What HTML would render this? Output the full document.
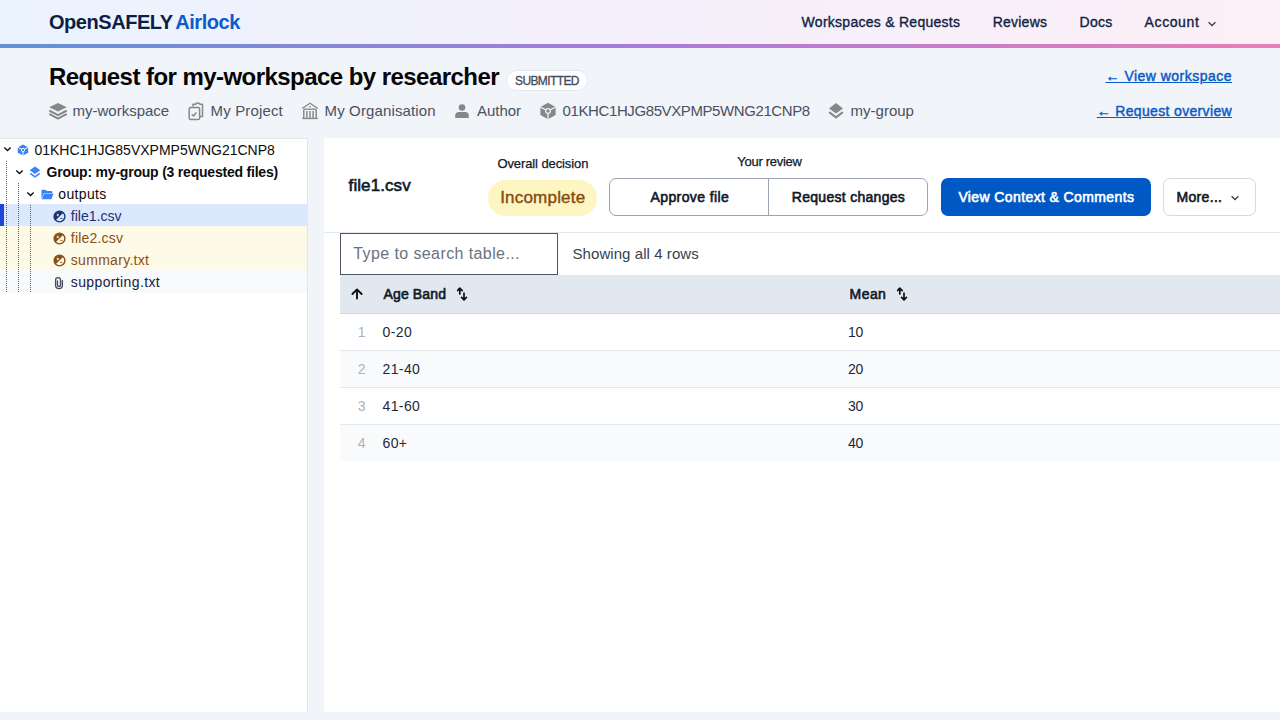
<!DOCTYPE html>
<html><head><meta charset="utf-8"><style>
html,body{margin:0;padding:0;}
body{width:1280px;height:720px;overflow:hidden;position:relative;background:#f1f4f9;font-family:"Liberation Sans",sans-serif;}
.t{position:absolute;white-space:nowrap;}
.r{position:absolute;display:block;}
</style></head><body>
<div class="r" style="left:0px;top:0px;width:1280px;height:44px;background:linear-gradient(90deg,#ebf3fe 0%,#f4effb 50%,#fdf0f7 100%);"></div>
<div class="r" style="left:0px;top:44px;width:1280px;height:4px;background:linear-gradient(90deg,#6092d6 0%,#a97bd9 50%,#e97eb6 100%);"></div>
<div class="t" style="left:49px;top:10.07px;font-size:20px;line-height:24px;color:#111;font-weight:700;letter-spacing:-0.45px;word-spacing:-1.5px;"><span style="color:#0b1f44">OpenSAFELY</span> <span style="color:#0b5bc8">Airlock</span></div>
<div class="t" style="left:801.6px;top:13.95px;font-size:14px;line-height:17px;color:#0f1f45;font-weight:400;letter-spacing:0.27px;-webkit-text-stroke:0.6px currentColor;-webkit-text-stroke:0.35px currentColor;">Workspaces &amp; Requests</div>
<div class="t" style="left:992.7px;top:13.95px;font-size:14px;line-height:17px;color:#0f1f45;font-weight:400;letter-spacing:0.23px;-webkit-text-stroke:0.6px currentColor;-webkit-text-stroke:0.35px currentColor;">Reviews</div>
<div class="t" style="left:1079.6px;top:13.95px;font-size:14px;line-height:17px;color:#0f1f45;font-weight:400;letter-spacing:0.23px;-webkit-text-stroke:0.6px currentColor;-webkit-text-stroke:0.35px currentColor;">Docs</div>
<div class="t" style="left:1144.6px;top:13.95px;font-size:14px;line-height:17px;color:#0f1f45;font-weight:400;letter-spacing:0.6px;-webkit-text-stroke:0.6px currentColor;-webkit-text-stroke:0.35px currentColor;">Account</div>
<svg class="r" style="left:1207px;top:19.5px;width:10px;height:8px" viewBox="0 0 10 8"><path d="M1.6 2.2 L5 5.5 L8.4 2.2" fill="none" stroke="#3a3f4a" stroke-width="1.35"/></svg>
<div class="t" style="left:49px;top:62.18px;font-size:24px;line-height:29px;color:#050505;font-weight:700;letter-spacing:-0.55px;">Request for my-workspace by researcher</div>
<div class="r" style="left:506px;top:70px;width:82px;height:21px;background:#fff;border:1px solid #e2e8f0;border-radius:11px;box-sizing:border-box;"></div>
<div class="t" style="left:515px;top:73.84px;font-size:12px;line-height:14px;color:#3f4b5b;font-weight:400;letter-spacing:-0.6px;-webkit-text-stroke:0.3px currentColor;">SUBMITTED</div>
<div class="t" style="left:72.5px;top:101.80px;font-size:15px;line-height:18px;color:#4b5160;font-weight:400;">my-workspace</div>
<div class="t" style="left:210.6px;top:101.80px;font-size:15px;line-height:18px;color:#4b5160;font-weight:400;letter-spacing:0.15px;">My Project</div>
<div class="t" style="left:324.5px;top:101.80px;font-size:15px;line-height:18px;color:#4b5160;font-weight:400;letter-spacing:0.14px;">My Organisation</div>
<div class="t" style="left:476.9px;top:101.80px;font-size:15px;line-height:18px;color:#4b5160;font-weight:400;">Author</div>
<div class="t" style="left:562.6px;top:101.80px;font-size:15px;line-height:18px;color:#4b5160;font-weight:400;letter-spacing:-0.4px;">01KHC1HJG85VXPMP5WNG21CNP8</div>
<div class="t" style="left:850.6px;top:101.80px;font-size:15px;line-height:18px;color:#4b5160;font-weight:400;">my-group</div>
<svg class="r" style="left:48px;top:102px;width:20px;height:18px" viewBox="0 0 20 18"><path d="M10 1 L18.8 5.3 L10 9.6 L1.2 5.3Z" fill="#878787"/><path d="M2 9 L10 13.2 L18 9" fill="none" stroke="#878787" stroke-width="2" stroke-linecap="round" stroke-linejoin="round"/><path d="M2 12.4 L10 16.6 L18 12.4" fill="none" stroke="#878787" stroke-width="2" stroke-linecap="round" stroke-linejoin="round"/></svg>
<svg class="r" style="left:187px;top:101px;width:18px;height:20px" viewBox="0 0 18 20"><g fill="none" stroke="#878787" stroke-width="1.5" stroke-linejoin="round"><path d="M6 5.5 V3.2 H8.5 Q10.8 0.8 13 3.2 H15.5 V15.5 H12.6"/><rect x="2.2" y="6.4" width="10.4" height="12.2" rx="1.6"/><path d="M4.8 13.2 L6.6 15 L9.4 11.6"/></g></svg>
<svg class="r" style="left:301px;top:102px;width:18px;height:18px" viewBox="0 0 18 18"><g fill="none" stroke="#878787" stroke-width="1.3" stroke-linejoin="round"><path d="M1.2 6.5 L9 1.2 L16.8 6.5"/><path d="M2.8 7.2 H15.2"/><path d="M1.2 16.5 H16.8"/><path d="M2.8 7.5 V16 M5.9 9 V16 M9 9 V16 M12.1 9 V16 M15.2 7.5 V16" stroke-width="1.5"/></g><rect x="8" y="4.3" width="2" height="1" fill="#878787"/></svg>
<svg class="r" style="left:454px;top:103px;width:16px;height:16px" viewBox="0 0 16 16"><circle cx="8" cy="4.5" r="3.3" fill="#878787"/><path d="M1.2 15 V12.6 Q1.2 9 5 9 H11 Q14.8 9 14.8 12.6 V15Z" fill="#878787"/></svg>
<svg class="r" style="left:539px;top:102px;width:18px;height:18px" viewBox="0 0 18 18"><path d="M9 0.8 L16.6 5 V13 L9 17.2 L1.4 13 V5Z" fill="#878787"/><g stroke="#f1f4f9" stroke-width="1.3" fill="none"><circle cx="9" cy="9" r="2.3"/><path d="M1.4 5 L7 8 M16.6 5 L11 8 M9 11.3 V17.5"/></g><circle cx="9" cy="9" r="1.2" fill="#878787"/></svg>
<svg class="r" style="left:828px;top:102px;width:16px;height:18px" viewBox="0 0 16 18"><path d="M8 1 L15 6.4 L8 11.6 L1 6.4Z" fill="#878787"/><path d="M1.8 10.6 L8 15.4 L14.2 10.6" fill="none" stroke="#878787" stroke-width="2" stroke-linecap="round" stroke-linejoin="round"/></svg>
<div class="t" style="right:48px;top:68.25px;font-size:14px;line-height:17px;color:#0b5ac4;font-weight:400;letter-spacing:0.48px;-webkit-text-stroke:0.6px currentColor;-webkit-text-stroke:0.45px currentColor;text-decoration:underline;text-underline-offset:1px;">← View workspace</div>
<div class="t" style="right:48px;top:103.25px;font-size:14px;line-height:17px;color:#0b5ac4;font-weight:400;letter-spacing:0.34px;-webkit-text-stroke:0.6px currentColor;-webkit-text-stroke:0.45px currentColor;text-decoration:underline;text-underline-offset:1px;">← Request overview</div>
<div class="r" style="left:0px;top:138px;width:308px;height:574px;background:#fff;border-top:1px solid #e3e5ea;border-right:1px solid #e3e5ea;box-sizing:border-box;"></div>
<div class="r" style="left:0px;top:204px;width:307px;height:22px;background:#dbe8fd;"></div>
<div class="r" style="left:0px;top:204px;width:4px;height:22px;background:#1d47d6;"></div>
<div class="r" style="left:0px;top:226px;width:307px;height:44px;background:#fefae8;"></div>
<div class="r" style="left:0px;top:270px;width:307px;height:23px;background:#f8fafc;"></div>
<div class="r" style="left:6px;top:161px;width:1px;height:132px;background:repeating-linear-gradient(180deg,#5c5c5c 0 1px,transparent 1px 2px);"></div>
<div class="r" style="left:18px;top:183px;width:1px;height:110px;background:repeating-linear-gradient(180deg,#5c5c5c 0 1px,transparent 1px 2px);"></div>
<div class="r" style="left:30px;top:205px;width:1px;height:88px;background:repeating-linear-gradient(180deg,#5c5c5c 0 1px,transparent 1px 2px);"></div>
<svg class="r" style="left:2.5px;top:146.3px;width:9px;height:6px" viewBox="0 0 9 6"><path d="M1.3 1.4 L4.5 4.5 L7.7 1.4" fill="none" stroke="#111" stroke-width="1.35"/></svg>
<svg class="r" style="left:14.5px;top:168.8px;width:9px;height:6px" viewBox="0 0 9 6"><path d="M1.3 1.4 L4.5 4.5 L7.7 1.4" fill="none" stroke="#111" stroke-width="1.35"/></svg>
<svg class="r" style="left:26.3px;top:190.5px;width:9px;height:6px" viewBox="0 0 9 6"><path d="M1.3 1.4 L4.5 4.5 L7.7 1.4" fill="none" stroke="#111" stroke-width="1.35"/></svg>
<svg class="r" style="left:17px;top:143.5px;width:12px;height:12px" viewBox="0 0 12 12"><path d="M6 0.5 L11.2 3.3 V8.7 L6 11.5 L0.8 8.7 V3.3Z" fill="#3b82f6"/><g stroke="#fff" stroke-width="1" fill="none"><circle cx="6" cy="6" r="1.6"/><path d="M0.8 3.3 L4.5 5.2 M11.2 3.3 L7.5 5.2 M6 7.6 V11.6"/></g><circle cx="6" cy="6" r="0.8" fill="#3b82f6"/></svg>
<svg class="r" style="left:29px;top:166px;width:12px;height:12px" viewBox="0 0 12 12"><path d="M6 0.5 L11.3 4.3 L6 8 L0.7 4.3Z" fill="#3b82f6"/><path d="M1.2 7.4 L6 10.8 L10.8 7.4" fill="none" stroke="#3b82f6" stroke-width="1.6" stroke-linejoin="round"/></svg>
<svg class="r" style="left:41px;top:188.5px;width:13px;height:11px" viewBox="0 0 13 11"><path d="M0.5 1.5 Q0.5 0.8 1.2 0.8 H4.6 L5.8 2 H10.6 Q11.3 2 11.3 2.7 V4 H3 L0.5 9.6Z" fill="#3b82f6"/><path d="M3.2 4.6 H12.6 L10.4 10.2 H0.6Z" fill="#3b82f6"/></svg>
<div class="t" style="left:34.4px;top:142.25px;font-size:14px;line-height:17px;color:#0c0c0c;font-weight:400;">01KHC1HJG85VXPMP5WNG21CNP8</div>
<div class="t" style="left:46.5px;top:164.35px;font-size:14px;line-height:17px;color:#0c0c0c;font-weight:700;letter-spacing:-0.21px;">Group: my-group (3 requested files)</div>
<div class="t" style="left:58.3px;top:186.15px;font-size:14px;line-height:17px;color:#0c0c0c;font-weight:400;letter-spacing:0.35px;">outputs</div>
<svg class="r" style="left:52.5px;top:209.5px;width:13px;height:13px" viewBox="0 0 13 13"><circle cx="6.5" cy="6.5" r="5.4" fill="none" stroke="#1e3270" stroke-width="1.4"/><path d="M2.7 10.3 A5.4 5.4 0 0 1 10.3 2.7Z" fill="#1e3270"/><path d="M3.6 5 H6 M4.8 3.8 V6.2" stroke="#dbe8fd" stroke-width="0.9"/><path d="M7.2 8.4 H9.4" stroke="#1e3270" stroke-width="0.9"/></svg>
<svg class="r" style="left:52.5px;top:231.5px;width:13px;height:13px" viewBox="0 0 13 13"><circle cx="6.5" cy="6.5" r="5.4" fill="none" stroke="#8a4f12" stroke-width="1.4"/><path d="M2.7 10.3 A5.4 5.4 0 0 1 10.3 2.7Z" fill="#8a4f12"/><path d="M3.6 5 H6 M4.8 3.8 V6.2" stroke="#fefae8" stroke-width="0.9"/><path d="M7.2 8.4 H9.4" stroke="#8a4f12" stroke-width="0.9"/></svg>
<svg class="r" style="left:52.5px;top:253.5px;width:13px;height:13px" viewBox="0 0 13 13"><circle cx="6.5" cy="6.5" r="5.4" fill="none" stroke="#8a4f12" stroke-width="1.4"/><path d="M2.7 10.3 A5.4 5.4 0 0 1 10.3 2.7Z" fill="#8a4f12"/><path d="M3.6 5 H6 M4.8 3.8 V6.2" stroke="#fefae8" stroke-width="0.9"/><path d="M7.2 8.4 H9.4" stroke="#8a4f12" stroke-width="0.9"/></svg>
<svg class="r" style="left:53px;top:274.6px;width:12px;height:16px" viewBox="0 0 12 16"><path d="M9.4 5.6 V10.2 A3.4 3.4 0 0 1 2.6 10.2 V5 A2.45 2.45 0 0 1 7.5 5 V10 A1.5 1.5 0 0 1 4.5 10 V6" fill="none" stroke="#454d5c" stroke-width="1.35" stroke-linecap="round"/></svg>
<div class="t" style="left:70.8px;top:207.95px;font-size:14px;line-height:17px;color:#1e3270;font-weight:400;letter-spacing:0.02px;">file1.csv</div>
<div class="t" style="left:70.8px;top:229.95px;font-size:14px;line-height:17px;color:#8a4f12;font-weight:400;letter-spacing:0.2px;">file2.csv</div>
<div class="t" style="left:70.8px;top:251.65px;font-size:14px;line-height:17px;color:#8a4f12;font-weight:400;letter-spacing:0.3px;">summary.txt</div>
<div class="t" style="left:70.8px;top:274.25px;font-size:14px;line-height:17px;color:#172040;font-weight:400;letter-spacing:0.37px;">supporting.txt</div>
<div class="r" style="left:324px;top:138px;width:956px;height:574px;background:#fff;"></div>
<div class="t" style="left:348.6px;top:176.11px;font-size:17px;line-height:20px;color:#111827;font-weight:400;letter-spacing:0.08px;-webkit-text-stroke:0.6px currentColor;">file1.csv</div>
<div class="t" style="left:497.4px;top:155.50px;font-size:13px;line-height:16px;color:#111827;font-weight:400;letter-spacing:-0.1px;-webkit-text-stroke:0.25px currentColor;">Overall decision</div>
<div class="r" style="left:488px;top:180px;width:109px;height:36px;background:#fef6c2;border-radius:18px;"></div>
<div class="t" style="left:500.2px;top:187.91px;font-size:17px;line-height:20px;color:#874b0d;font-weight:400;letter-spacing:0.2px;-webkit-text-stroke:0.6px currentColor;-webkit-text-stroke:0.4px currentColor;">Incomplete</div>
<div class="t" style="left:737.3px;top:154.00px;font-size:13px;line-height:16px;color:#111827;font-weight:400;letter-spacing:-0.28px;-webkit-text-stroke:0.25px currentColor;">Your review</div>
<div class="r" style="left:609px;top:178px;width:319px;height:38px;border:1px solid #9aa3b2;border-radius:7px;box-sizing:border-box;"></div>
<div class="r" style="left:768px;top:179px;width:1px;height:36px;background:#9aa3b2;"></div>
<div class="t" style="left:650.5px;top:188.95px;font-size:14px;line-height:17px;color:#111827;font-weight:400;letter-spacing:0.4px;-webkit-text-stroke:0.6px currentColor;">Approve file</div>
<div class="t" style="left:791.8px;top:188.95px;font-size:14px;line-height:17px;color:#111827;font-weight:400;letter-spacing:0.29px;-webkit-text-stroke:0.6px currentColor;">Request changes</div>
<div class="r" style="left:941px;top:178px;width:210px;height:38px;background:#0058c4;border-radius:7px;"></div>
<div class="t" style="left:958.4px;top:188.85px;font-size:14px;line-height:17px;color:#fff;font-weight:400;letter-spacing:0.39px;-webkit-text-stroke:0.6px currentColor;">View Context &amp; Comments</div>
<div class="r" style="left:1163px;top:178px;width:93px;height:38px;border:1px solid #d5d9e0;border-radius:7px;box-sizing:border-box;"></div>
<div class="t" style="left:1176.5px;top:188.85px;font-size:14px;line-height:17px;color:#111827;font-weight:400;letter-spacing:0.32px;-webkit-text-stroke:0.6px currentColor;">More...</div>
<svg class="r" style="left:1230px;top:193.6px;width:10px;height:8px" viewBox="0 0 10 8"><path d="M1.6 2.2 L5 5.5 L8.4 2.2" fill="none" stroke="#3a3f4a" stroke-width="1.35"/></svg>
<div class="r" style="left:324px;top:232px;width:956px;height:1px;background:#e2e8f0;"></div>
<div class="r" style="left:340px;top:233px;width:218px;height:42px;border:1px solid #4b5563;box-sizing:border-box;background:#fff;"></div>
<div class="t" style="left:353.3px;top:243.66px;font-size:16px;line-height:19px;color:#6b7280;font-weight:400;letter-spacing:0.4px;">Type to search table...</div>
<div class="t" style="left:572.5px;top:244.50px;font-size:15px;line-height:18px;color:#374151;font-weight:400;letter-spacing:0.07px;">Showing all 4 rows</div>
<div class="r" style="left:340px;top:275px;width:940px;height:39px;background:#e2e8f0;border-bottom:1px solid #cdd5e0;box-sizing:border-box;"></div>
<svg class="r" style="left:350px;top:287px;width:14px;height:14px" viewBox="0 0 14 14"><path d="M7 11.5 V2.8 M2.4 7 L7 2.4 L11.6 7" fill="none" stroke="#111" stroke-width="1.9" stroke-linecap="round" stroke-linejoin="round"/></svg>
<div class="t" style="left:383.5px;top:285.65px;font-size:14px;line-height:17px;color:#111827;font-weight:400;letter-spacing:0.14px;-webkit-text-stroke:0.6px currentColor;">Age Band</div>
<svg class="r" style="left:457px;top:287px;width:11px;height:14px" viewBox="0 0 11 14"><g fill="none" stroke="#111" stroke-width="1.7" stroke-linecap="round" stroke-linejoin="round"><path d="M2.8 7 V1.4 M0.4 3.6 L2.8 1.2 L5.2 3.6"/><path d="M7 6.2 V12.6 M4.6 10.4 L7 12.8 L9.4 10.4"/></g></svg>
<div class="t" style="left:849.6px;top:285.65px;font-size:14px;line-height:17px;color:#111827;font-weight:400;letter-spacing:0.43px;-webkit-text-stroke:0.6px currentColor;">Mean</div>
<svg class="r" style="left:897px;top:287px;width:11px;height:14px" viewBox="0 0 11 14"><g fill="none" stroke="#111" stroke-width="1.7" stroke-linecap="round" stroke-linejoin="round"><path d="M2.8 7 V1.4 M0.4 3.6 L2.8 1.2 L5.2 3.6"/><path d="M7 6.2 V12.6 M4.6 10.4 L7 12.8 L9.4 10.4"/></g></svg>
<div class="r" style="left:340px;top:314px;width:940px;height:36px;background:#fff;"></div>
<div class="r" style="left:340px;top:350px;width:940px;height:1px;background:#e2e8f0;"></div>
<div class="t" style="right:914.5px;top:323.55px;font-size:14px;line-height:17px;color:#acb2bc;font-weight:400;">1</div>
<div class="t" style="left:382.5px;top:323.55px;font-size:14px;line-height:17px;color:#1f2937;font-weight:400;letter-spacing:0.4px;">0-20</div>
<div class="t" style="left:848px;top:323.55px;font-size:14px;line-height:17px;color:#1f2937;font-weight:400;letter-spacing:-0.2px;">10</div>
<div class="r" style="left:340px;top:351px;width:940px;height:36px;background:#f8fafc;"></div>
<div class="r" style="left:340px;top:387px;width:940px;height:1px;background:#e2e8f0;"></div>
<div class="t" style="right:914.5px;top:360.55px;font-size:14px;line-height:17px;color:#acb2bc;font-weight:400;">2</div>
<div class="t" style="left:382.5px;top:360.55px;font-size:14px;line-height:17px;color:#1f2937;font-weight:400;letter-spacing:0.4px;">21-40</div>
<div class="t" style="left:848px;top:360.55px;font-size:14px;line-height:17px;color:#1f2937;font-weight:400;letter-spacing:-0.2px;">20</div>
<div class="r" style="left:340px;top:388px;width:940px;height:36px;background:#fff;"></div>
<div class="r" style="left:340px;top:424px;width:940px;height:1px;background:#e2e8f0;"></div>
<div class="t" style="right:914.5px;top:397.55px;font-size:14px;line-height:17px;color:#acb2bc;font-weight:400;">3</div>
<div class="t" style="left:382.5px;top:397.55px;font-size:14px;line-height:17px;color:#1f2937;font-weight:400;letter-spacing:0.4px;">41-60</div>
<div class="t" style="left:848px;top:397.55px;font-size:14px;line-height:17px;color:#1f2937;font-weight:400;letter-spacing:-0.2px;">30</div>
<div class="r" style="left:340px;top:425px;width:940px;height:36px;background:#f8fafc;"></div>
<div class="t" style="right:914.5px;top:434.55px;font-size:14px;line-height:17px;color:#acb2bc;font-weight:400;">4</div>
<div class="t" style="left:382.5px;top:434.55px;font-size:14px;line-height:17px;color:#1f2937;font-weight:400;letter-spacing:0.4px;">60+</div>
<div class="t" style="left:848px;top:434.55px;font-size:14px;line-height:17px;color:#1f2937;font-weight:400;letter-spacing:-0.2px;">40</div>
</body></html>
